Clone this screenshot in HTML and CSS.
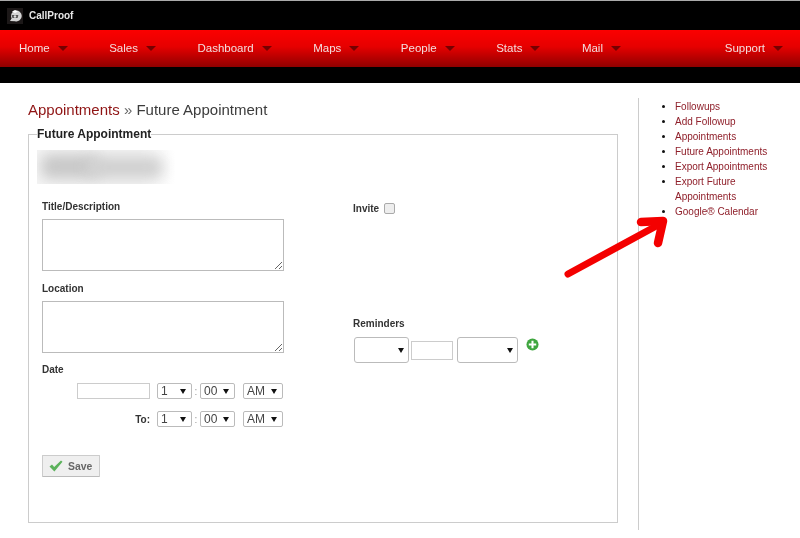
FILE: index.html
```html
<!DOCTYPE html>
<html lang="en">
<head>
<meta charset="utf-8">
<title>CallProof</title>
<link rel="stylesheet" href="styles.css">
</head>
<body>
<header class="topbar">
  <svg class="logo" viewBox="0 0 16 16" aria-hidden="true">
    <rect width="16" height="16" fill="#1c1818"/>
    <path d="M3 13 L4.6 10.5 A5.4 5.4 0 1 1 8 13.2 Z" fill="#d4d4d4"/>
    <path d="M5 3.6 L8 2 L11 3.6 L8 5 Z" fill="#fff"/>
    <path d="M4.6 7 H11.4 L10.6 10 H5.4 Z" fill="#555"/>
    <circle cx="8" cy="8.5" r="1.2" fill="#ddd"/>
  </svg>
  <span class="brand">CallProof</span>
</header>
<nav class="nav">
  <a class="nav-item">Home</a>
  <a class="nav-item">Sales</a>
  <a class="nav-item">Dashboard</a>
  <a class="nav-item">Maps</a>
  <a class="nav-item">People</a>
  <a class="nav-item">Stats</a>
  <a class="nav-item">Mail</a>
  <a class="nav-item nav-end">Support</a>
</nav>
<div class="subbar"></div>
<div class="page">
  <main class="main">
    <h1 class="title"><a class="title-link">Appointments</a> <span class="title-sep">»</span> Future Appointment</h1>
    <fieldset class="panel">
      <legend class="legend">Future Appointment</legend>
      <div class="redacted"><i class="smear s1"></i><i class="smear s2"></i></div>
      <div class="columns">
        <div class="col-left">
          <label class="label first">Title/Description</label>
          <textarea class="area"></textarea>
          <label class="label loc">Location</label>
          <textarea class="area"></textarea>
          <label class="label date">Date</label>
          <div class="time-row one">
            <input class="date-input" type="text">
            <span class="sel w35"><select><option>1</option></select></span>
            <span class="colon">:</span>
            <span class="sel w35"><select><option>00</option></select></span>
            <span class="sel w40 gap"><select><option>AM</option></select></span>
          </div>
          <div class="time-row two">
            <span class="to">To:</span>
            <span class="sel w35"><select><option>1</option></select></span>
            <span class="colon">:</span>
            <span class="sel w35"><select><option>00</option></select></span>
            <span class="sel w40 gap"><select><option>AM</option></select></span>
          </div>
          <button class="save" type="button">
            <svg class="check" viewBox="0 0 14 12" aria-hidden="true"><path d="M0.5 6.5 L3 4.5 L5.2 7 L12 0.5 L13.5 1.8 L5.4 11.5 Z" fill="#5cb25c"/></svg>
            Save
          </button>
        </div>
        <div class="col-right">
          <div class="invite"><label class="label inline">Invite</label><input class="check-box" type="checkbox"></div>
          <label class="label rem">Reminders</label>
          <div class="rem-row">
            <span class="sel big w55"><select></select></span>
            <input class="rem-input" type="text">
            <span class="sel big w61"><select></select></span>
            <svg class="plus" viewBox="0 0 14 14" aria-hidden="true">
              <circle cx="7" cy="7" r="6.5" fill="#3fa63f"/>
              <path d="M7 3 V11 M3 7 H11" stroke="#fff" stroke-width="2.2"/>
            </svg>
          </div>
        </div>
      </div>
    </fieldset>
  </main>
  <aside class="side">
    <ul class="links">
      <li><a>Followups</a></li>
      <li><a>Add Followup</a></li>
      <li><a>Appointments</a></li>
      <li><a>Future Appointments</a></li>
      <li><a>Export Appointments</a></li>
      <li><a>Export Future Appointments</a></li>
      <li><a>Google® Calendar</a></li>
    </ul>
  </aside>
</div>
<svg class="arrow" viewBox="0 0 800 538" aria-hidden="true">
  <path class="arrow-shaft" d="M568 274 L660 224"/>
  <path class="arrow-head" d="M641 222 L663 221 L658 243"/>
</svg>
</body>
</html>
```
FILE: styles.css
```css
* { box-sizing: border-box; }
html, body { margin: 0; padding: 0; }
body {
  width: 800px;
  height: 538px;
  overflow: hidden;
  position: relative;
  background: #fff;
  font-family: "Liberation Sans", Arial, sans-serif;
  color: #333;
  filter: blur(0.3px);
}
.topbar {
  height: 30px;
  background: #000;
  border-top: 1px solid #aaa;
  display: flex;
  align-items: center;
  padding-left: 7px;
  gap: 6px;
}
.logo { width: 16px; height: 16px; }
.brand { color: #e6e6e6; font-size: 10px; font-weight: bold; }
.nav {
  height: 37px;
  background: linear-gradient(#fb0000 0%, #e60000 45%, #8f0000 100%);
  display: flex;
  align-items: center;
  padding: 0 17px 2px 19px;
  gap: 41.5px;
}
.nav-item {
  display: flex;
  align-items: center;
  color: #f3dede;
  font-size: 11.5px;
}
.nav-item::after {
  content: "";
  margin: 2px 0 0 8px;
  border-left: 5px solid transparent;
  border-right: 5px solid transparent;
  border-top: 5px solid #760000;
}
.nav-end { margin-left: auto; }
.subbar { height: 16px; background: #000; }
.page { display: flex; height: 455px; }
.main { width: 638px; padding: 0 20px 0 28px; }
.title {
  margin: 18px 0 9px;
  font-size: 15px;
  line-height: 17px;
  font-weight: normal;
  color: #3c3c3c;
}
.title-link { color: #8f1414; }
.title-sep { color: #666; }
.panel {
  margin: 0;
  padding: 0 0 0 13px;
  width: 590px;
  height: 396px;
  border: 1px solid #ccc;
  position: relative;
}
.legend {
  margin-left: -5px;
  padding: 0;
  font-size: 12px;
  font-weight: bold;
  line-height: 14px;
  color: #222;
}
.redacted {
  margin: 9px 0 0 -5px;
  width: 138px;
  height: 34px;
  background: linear-gradient(90deg, #f5f5f5 75%, #fff 100%);
  position: relative;
  overflow: hidden;
}
.smear {
  position: absolute;
  background: #c8c8c8;
  filter: blur(7px);
  border-radius: 8px;
}
.s1 { left: 4px; top: 4px; width: 58px; height: 25px; }
.s2 { left: 50px; top: 6px; width: 76px; height: 23px; background: #d0d0d0; }
.columns { display: grid; grid-template-columns: 311px 1fr; }
.label {
  display: block;
  font-size: 10px;
  font-weight: bold;
  line-height: 12px;
  color: #333;
}
.label.first { margin-top: 17px; }
.area {
  display: block;
  width: 242px;
  height: 52px;
  margin: 0;
  border: 1px solid #bbb;
  background: #fff;
  border-radius: 0;
  padding: 0;
}
.col-left .first + .area { margin-top: 6px; }
.label.loc { margin: 12px 0 6px; }
.label.date { margin: 11px 0 7px; }
.time-row { display: flex; align-items: center; justify-content: flex-end; width: 241px; height: 16px; }
.time-row.two { margin-top: 12px; }
.date-input {
  width: 73px;
  height: 16px;
  margin: 0 7px 0 0;
  padding: 0;
  border: 1px solid #ccc;
}
.sel { position: relative; display: block; height: 16px; }
.sel select {
  appearance: none;
  -webkit-appearance: none;
  display: block;
  width: 100%;
  height: 100%;
  margin: 0;
  padding: 0 0 0 3px;
  border: 1px solid #bbb;
  border-radius: 2px;
  background: #fff;
  color: #444;
  font: 12px "Liberation Sans", Arial, sans-serif;
}
.sel::after {
  content: "";
  position: absolute;
  right: 6px;
  top: 6px;
  border-left: 3px solid transparent;
  border-right: 3px solid transparent;
  border-top: 5px solid #111;
}
.w35 { width: 35px; }
.w40 { width: 40px; }
.gap { margin-left: 8px; }
.colon { width: 8px; text-align: center; font-size: 10px; color: #999; }
.to { font-size: 10px; font-weight: bold; margin-right: 7px; color: #333; }
.save {
  display: flex;
  align-items: center;
  gap: 5px;
  width: 58px;
  height: 22px;
  margin-top: 28px;
  padding: 0 0 0 6px;
  border: 1px solid #ccc;
  border-bottom-color: #bbb;
  border-radius: 1px;
  background: #efefef;
  color: #666;
  font: bold 10.4px "Liberation Sans", Arial, sans-serif;
}
.check { width: 14px; height: 12px; }
.invite { display: flex; align-items: center; margin-top: 19px; height: 12px; }
.label.inline { margin-right: 5px; }
.check-box {
  appearance: none;
  -webkit-appearance: none;
  flex: none;
  width: 11px;
  height: 11px;
  margin: 0 0 2px;
  border: 1px solid #aaa;
  border-radius: 2px;
  background: #eee;
}
.label.rem { margin: 103px 0 7px; }
.rem-row { display: flex; align-items: center; height: 26px; margin-left: 1px; }
.sel.big { height: 26px; }
.sel.big select { border-radius: 3px; }
.sel.big::after { top: 11px; right: 5px; }
.w55 { width: 55px; }
.w61 { width: 61px; }
.rem-input {
  width: 42px;
  height: 19px;
  margin: 0 4px 0 2px;
  padding: 0;
  border: 1px solid #ccc;
}
.plus { width: 13px; height: 13px; margin: 0 0 12px 8px; }
.side {
  width: 162px;
  height: 432px;
  margin-top: 15px;
  border-left: 1px solid #ccc;
  padding-top: 1px;
}
.links {
  margin: 0;
  padding: 0 32px 0 36px;
  font-size: 10px;
  line-height: 15px;
  color: #111;
}
.links a { color: #8f1f2a; }
.arrow { position: absolute; left: 0; top: 0; width: 800px; height: 538px; pointer-events: none; }
.arrow-shaft, .arrow-head { fill: none; stroke: #f40000; stroke-linecap: round; stroke-linejoin: round; }
.arrow-shaft { stroke-width: 7; }
.arrow-head { stroke-width: 8.5; }
```
